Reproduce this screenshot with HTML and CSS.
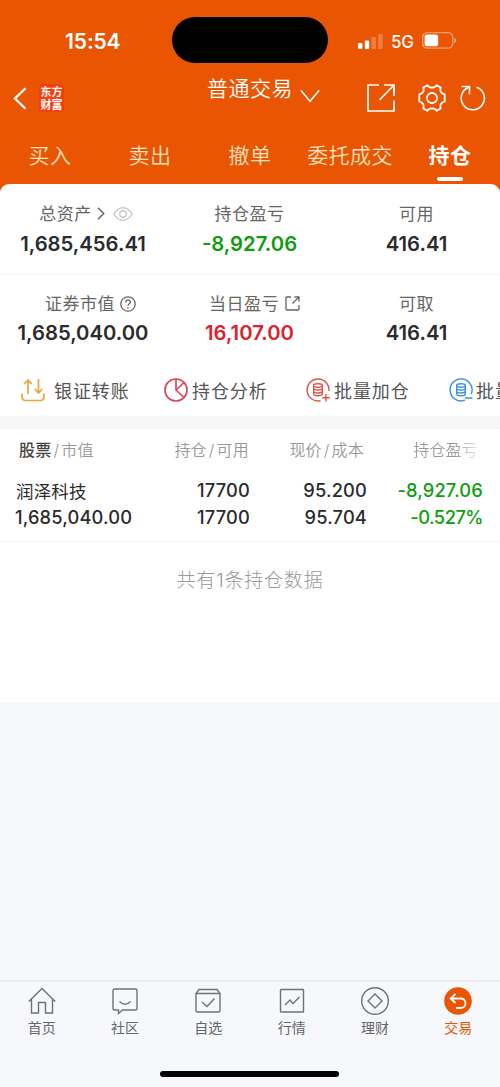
FILE: index.html
```html
<!DOCTYPE html>
<html lang="zh-CN">
<head>
<meta charset="utf-8">
<title>普通交易</title>
<link rel="stylesheet" href="styles.css">
</head>
<body>
<div class="app">
  <header class="top">
    <div class="status">
      <div class="clock">15:54</div>
      <div class="island"></div>
      <div class="signals">
        <svg class="bars" width="25" height="16" viewBox="0 0 25 16" fill="#fff"><rect x="0" y="10" width="4.4" height="6" rx="1.2"/><rect x="6.8" y="7.5" width="4.4" height="8.5" rx="1.2"/><rect x="13.5" y="4" width="4.4" height="12" rx="1.2" opacity=".25"/><rect x="20.2" y="1" width="4.4" height="15" rx="1.2" opacity=".25"/></svg>
        <span class="net">5G</span>
        <svg width="35" height="17" viewBox="0 0 35 17"><rect x=".7" y=".7" width="30" height="15.4" rx="4.6" fill="none" stroke="#fff" stroke-opacity=".45" stroke-width="1.3"/><rect x="2.6" y="2.6" width="13.6" height="11.6" rx="2.8" fill="#fff"/><path d="M32.3 6v5q2-.8 2-2.5t-2-2.500z" fill="#fff" fill-opacity=".5"/></svg>
      </div>
    </div>
    <div class="nav">
      <svg class="back" width="14" height="23" viewBox="0 0 14 23" fill="none" stroke="#fff" stroke-width="2.3"><path d="M12.500 1.200 2 11.500l10.500 10.300"/></svg>
      <div class="brand">东方<br>财富</div>
      <div class="title">普通交易<svg width="20" height="14" viewBox="0 0 20 14" fill="none" stroke="#fff" stroke-width="1.600"><path d="m.8 1.200 9.200 11 9.200-11"/></svg></div>
      <div class="actions">
        <svg width="28" height="28" viewBox="0 0 28 28" fill="none" stroke="#fff" stroke-width="1.700"><path d="M12 1H1v26h26V16.500M17 1h10v11M27 1 12.500 16"/></svg>
        <svg width="28" height="28" viewBox="0 0 28 28" fill="none" stroke="#fff" stroke-width="1.800" stroke-linejoin="round"><path d="M9.300 1.200Q10.800 3.600 14 3.600T18.700 1.200L22.700 3.600Q21.200 9 26.700 10.300V17.700Q21.200 19 22.700 24.400L18.700 26.800Q17.200 24.400 14 24.400T9.300 26.800L5.300 24.400Q6.800 19 1.300 17.700V10.300Q6.800 9 5.300 3.600Z"/><circle cx="14" cy="14" r="5"/></svg>
        <svg width="26" height="26" viewBox="0 0 26 26" fill="none" stroke="#fff" stroke-width="1.600"><path d="M16.500 2.200A11.600 11.600 0 1 1 8.800 2.300M1.500 1.500h8v7.800"/></svg>
      </div>
    </div>
    <nav class="tabs"><span>买入</span><span>卖出</span><span>撤单</span><span>委托成交</span><span class="on">持仓</span></nav>
  </header>

  <main class="panel">
    <section class="summary">
      <div class="cell"><div class="label assets">总资产<svg class="chev" width="8" height="13" viewBox="0 0 8 13" fill="none" stroke="#666" stroke-width="1.500"><path d="m1 .8 5.700 5.700L1 12.200"/></svg><svg class="eye" width="20" height="14" viewBox="0 0 20 14" fill="none" stroke="#c5c8cc" stroke-width="1.400"><path d="M.8 7Q4.600.8 10 .8T19.200 7Q15.400 13.200 10 13.200T.8 7z"/><circle cx="10" cy="7" r="3.200"/></svg></div><div class="value">1,685,456.41</div></div>
      <div class="cell"><div class="label">持仓盈亏</div><div class="value down">-8,927.06</div></div>
      <div class="cell"><div class="label">可用</div><div class="value">416.41</div></div>
    </section>
    <section class="summary second">
      <div class="cell"><div class="label market">证券市值<svg class="help" width="16" height="16" viewBox="0 0 16 16" fill="none" stroke="#666" stroke-width="1.300"><circle cx="8" cy="8" r="7.200"/><path d="M5.800 6.400C5.800 3 10.400 3.300 10.400 6c0 1.800-2.400 1.800-2.400 3.700M8 10.900v1.500"/></svg></div><div class="value">1,685,040.00</div></div>
      <div class="cell"><div class="label today">当日盈亏<svg class="share" width="15" height="15" viewBox="0 0 15 15" fill="none" stroke="#666" stroke-width="1.300"><path d="M6 1H2Q1 1 1 2v11q0 1 1 1h11q1 0 1-1V9M9.500 1H14v4.500M14 1 7.500 7.500"/></svg></div><div class="value up">16,107.00</div></div>
      <div class="cell"><div class="label">可取</div><div class="value">416.41</div></div>
    </section>
    <section class="tools">
      <div class="tool t1"><svg width="24" height="24" viewBox="0 0 24 24" fill="none" stroke="#e9a63a" stroke-width="1.700" stroke-linecap="round" stroke-linejoin="round"><path d="M1 16v2.500q0 4 4 4h14q4 0 4-4V16M7 15.500V2M3.500 5.500 7 2l3.200 3.500M17.500 1.500V15M14.300 11.500l3.200 3.500 3.200-3.500"/></svg><span>银证转账</span></div>
      <div class="tool t2"><svg width="24" height="24" viewBox="0 0 24 24" fill="none" stroke="#d9485a" stroke-width="1.700"><circle cx="12" cy="12" r="11"/><path d="M12 1v11l8 7.500M12 12l8-7.500"/></svg><span>持仓分析</span></div>
      <div class="tool t3"><svg width="24" height="24" viewBox="0 0 24 24" fill="none" stroke="#d9564a" stroke-width="1.400"><path d="M14.500 22.700A11 11 0 1 1 23 13"/><ellipse cx="12" cy="7.500" rx="4.300" ry="1.700"/><path d="M7.700 7.500v8.500c0 2.300 8.600 2.300 8.600 0V7.500M7.700 10.300c0 2.300 8.600 2.300 8.600 0M7.700 13.200c0 2.300 8.600 2.300 8.600 0M20 16v7.500M16.300 19.800h7.500"/></svg><span>批量加仓</span></div>
      <div class="tool t4"><svg width="24" height="24" viewBox="0 0 24 24" fill="none" stroke="#3f91d5" stroke-width="1.400"><path d="M16 22.200A11 11 0 1 1 22.300 16"/><ellipse cx="12" cy="7.500" rx="4.300" ry="1.700"/><path d="M7.700 7.500v8.500c0 2.300 8.600 2.300 8.600 0V7.500M7.700 10.300c0 2.300 8.600 2.300 8.600 0M7.700 13.200c0 2.300 8.600 2.300 8.600 0M16 20h7.500"/></svg><span>批量</span></div>
    </section>
    <section class="holdings">
      <div class="row head"><span><b>股票</b><i>/</i>市值</span><span>持仓<i>/</i>可用</span><span>现价<i>/</i>成本</span><span class="fade">持仓盈亏</span></div>
      <div class="row first"><span class="stock">润泽科技</span><span>17700</span><span>95.200</span><span class="down">-8,927.06</span></div>
      <div class="row last"><span>1,685,040.00</span><span>17700</span><span>95.704</span><span class="down percent">-0.527%</span></div>
    </section>
    <div class="count">共有<em>1</em>条持仓数据</div>
  </main>

  <footer class="bottom">
    <div class="item"><svg width="28" height="28" viewBox="0 0 28 28"><path d="M.8 14.500 14 1.500l13.200 13M3.500 12.500V26h7V15.500h7V26h7V12.500"/></svg><span>首页</span></div>
    <div class="item"><svg width="28" height="28" viewBox="0 0 28 28"><path d="M3.500 2h21q1.500 0 1.500 1.500v18q0 1.500-1.500 1.500h-13l-4 3.500V23h-4Q2 23 2 21.500v-18Q2 2 3.500 2zM8.500 14.500q5.500 5.500 11 0"/></svg><span>社区</span></div>
    <div class="item"><svg width="28" height="28" viewBox="0 0 28 28"><path d="M2 6.500h24V23q0 2-2 2H4q-2 0-2-2V6.500l3-4h18l3 4M8 15l5 4.500 7.500-8"/></svg><span>自选</span></div>
    <div class="item"><svg width="28" height="28" viewBox="0 0 28 28"><rect x="2.500" y="2.500" width="23" height="22.500" rx=".6"/><path d="m7 18 5-5 3 3.500 6.500-6.500"/></svg><span>行情</span></div>
    <div class="item"><svg width="28" height="28" viewBox="0 0 28 28"><circle cx="14" cy="14" r="13.300"/><path d="m14 7 7 7-7 7-7-7z"/></svg><span>理财</span></div>
    <div class="item active"><svg width="28" height="28" viewBox="0 0 28 28"><circle class="disc" cx="14" cy="14" r="13.800"/><path class="arrow" d="M11.500 7 6.500 11.500l5 4.500M7 11.500h10c6 0 6 9.500 0 9.500h-5"/></svg><span>交易</span></div>
    <div class="homebar"></div>
  </footer>
</div>
</body>
</html>
```
FILE: styles.css
```css
* { box-sizing: border-box; }
body { margin: 0; background: #f7f8fb; font-family: Inter, "Noto Sans CJK SC", sans-serif; color: #2b2b2d; }
.app { width: 500px; height: 1087px; display: flex; flex-direction: column; overflow: hidden; }
svg { display: block; flex: none; }
i, em { font-style: normal; }

.top { height: 194px; margin-bottom: -10px; flex: none; background: #e95503; color: #fff; }
.status { height: 80px; display: grid; grid-template-columns: 172px 156px 1fr; padding-top: 17px; }
.clock { padding-left: 65px; font-size: 21px; font-weight: 600; line-height: 49px; letter-spacing: -.1px; }
.island { height: 46px; border-radius: 23px; background: #000; }
.signals { display: flex; align-items: center; height: 47px; padding-left: 30px; }
.net { font-size: 17px; font-weight: 500; margin: 2px 8px 0; width: 23px; letter-spacing: -.3px; }
.nav { height: 50px; display: grid; grid-template-columns: 26px 168px 160px 1fr; padding-left: 13px; }
.back { margin-top: 7px; }
.brand { margin-top: 4px; width: 25px; height: 28px; padding-top: 1px; border-radius: 4px; background: #fa3c0c; font: 700 11px/13px "Noto Sans CJK SC", sans-serif; text-align: center; }
.title { display: flex; font-size: 21px; font-weight: 350; line-height: 30px; height: 30px; margin-top: -6px; letter-spacing: .5px; }
.title svg { margin: 15px 0 0 7px; }
.actions { display: flex; align-items: center; height: 36px; }
.actions svg + svg { margin-left: 23px; }
.actions svg + svg + svg { margin-left: 14px; }
.tabs { height: 54px; display: grid; grid-template-columns: repeat(5, 100px); text-align: center; font-size: 21px; font-weight: 350; line-height: 52px; color: #ffe1bd; letter-spacing: .4px; }
.tabs .on { color: #fff; font-weight: 700; display: flex; flex-direction: column; align-items: center; }
.tabs .on::after { content: ""; width: 26px; height: 4px; margin-top: -5px; border-radius: 2px; background: #fff; flex: none; }

.panel { height: 518px; flex: none; background: #fff; border-radius: 9px 9px 0 0; overflow: hidden; }
.summary { height: 91px; padding-top: 17px; display: grid; grid-template-columns: 166px 167px 167px; border-bottom: 1px solid #f7f7f8; }
.summary.second { height: 89px; border: 0; padding-top: 16px; }
.cell { display: flex; flex-direction: column; align-items: center; }
.label { height: 26px; line-height: 26px; font-size: 17px; letter-spacing: .5px; color: #666; display: flex; align-items: center; }
.label svg { margin-top: -1px; }
.assets { margin-left: 6px; }
.market { margin-left: 15px; }
.today { margin-left: 10px; }
.value { font-size: 20.300px; line-height: 24px; font-weight: 600; margin-top: 5px; white-space: nowrap; }
.second .value { margin-top: 4px; }
.chev { margin-left: 5px; }
.eye { margin-left: 8px; }
.help { margin-left: 5px; }
.share { margin-left: 6px; }
.down { color: #109c10; }
.up { color: #d9232c; }
.tools { height: 52px; display: flex; align-items: center; white-space: nowrap; padding-left: 21px; }
.tool { width: 143px; flex: none; display: flex; align-items: center; font-size: 18px; line-height: 28px; letter-spacing: .9px; color: #555; }
.tool span { margin: 3px 0 0 4px; }
.tool.t1 span { margin-left: 9px; }
.tool.t3 svg, .tool.t4 svg { margin-left: -1px; }
.tool.t4 span { margin-left: 3px; }

.holdings { border-top: 13px solid #f7f7f8; border-bottom: 1px solid #f4f4f5; height: 126px; }
.row { display: grid; padding-left: 15px; padding-right: 16px; grid-template-columns: 125px 110px 117px 116px; font-size: 18.300px; letter-spacing: .15px; font-weight: 500; line-height: 27px; text-align: right; white-space: nowrap; }
.row > :first-child { text-align: left; }
.head { height: 42px; line-height: 42px; font-size: 16px; font-weight: 350; color: #999; padding-left: 19px; grid-template-columns: 121px 109px 115px 114px; letter-spacing: .2px; }
.head b { font-weight: 500; color: #444; }
.head i { margin: 0 2px; }
.first { padding-top: 6px; height: 33px; }
.row .stock { font-weight: 400; font-size: 17.500px; padding: 1px 0 0 1px; }
.row .percent { letter-spacing: -.5px; }
.fade { background: linear-gradient(90deg, #999 80%, #fff 105%); background-clip: text; color: transparent; }
.count { text-align: center; font-size: 19px; font-weight: 300; line-height: 28px; padding-top: 25px; color: #999; letter-spacing: .8px; }

.bottom { height: 107px; margin-top: 278px; flex: none; border-top: 2px solid #eeeff1; display: grid; grid-template-columns: repeat(6, 83.333px); grid-template-rows: 89px 6px; padding-top: 5px; }
.item { display: flex; flex-direction: column; align-items: center; font-size: 14px; line-height: 20px; color: #666; }
.item svg { fill: none; stroke: #707174; stroke-width: 1.400; }
.item span { margin-top: 3px; }
.item.active { color: #e95503; }
.item .disc { fill: #e95503; stroke: none; }
.item .arrow { stroke: #fff; stroke-width: 1.800; }
.homebar { grid-column: 1 / -1; justify-self: center; width: 179px; height: 6px; margin-top: -5px; border-radius: 3px; background: #000; }
```
